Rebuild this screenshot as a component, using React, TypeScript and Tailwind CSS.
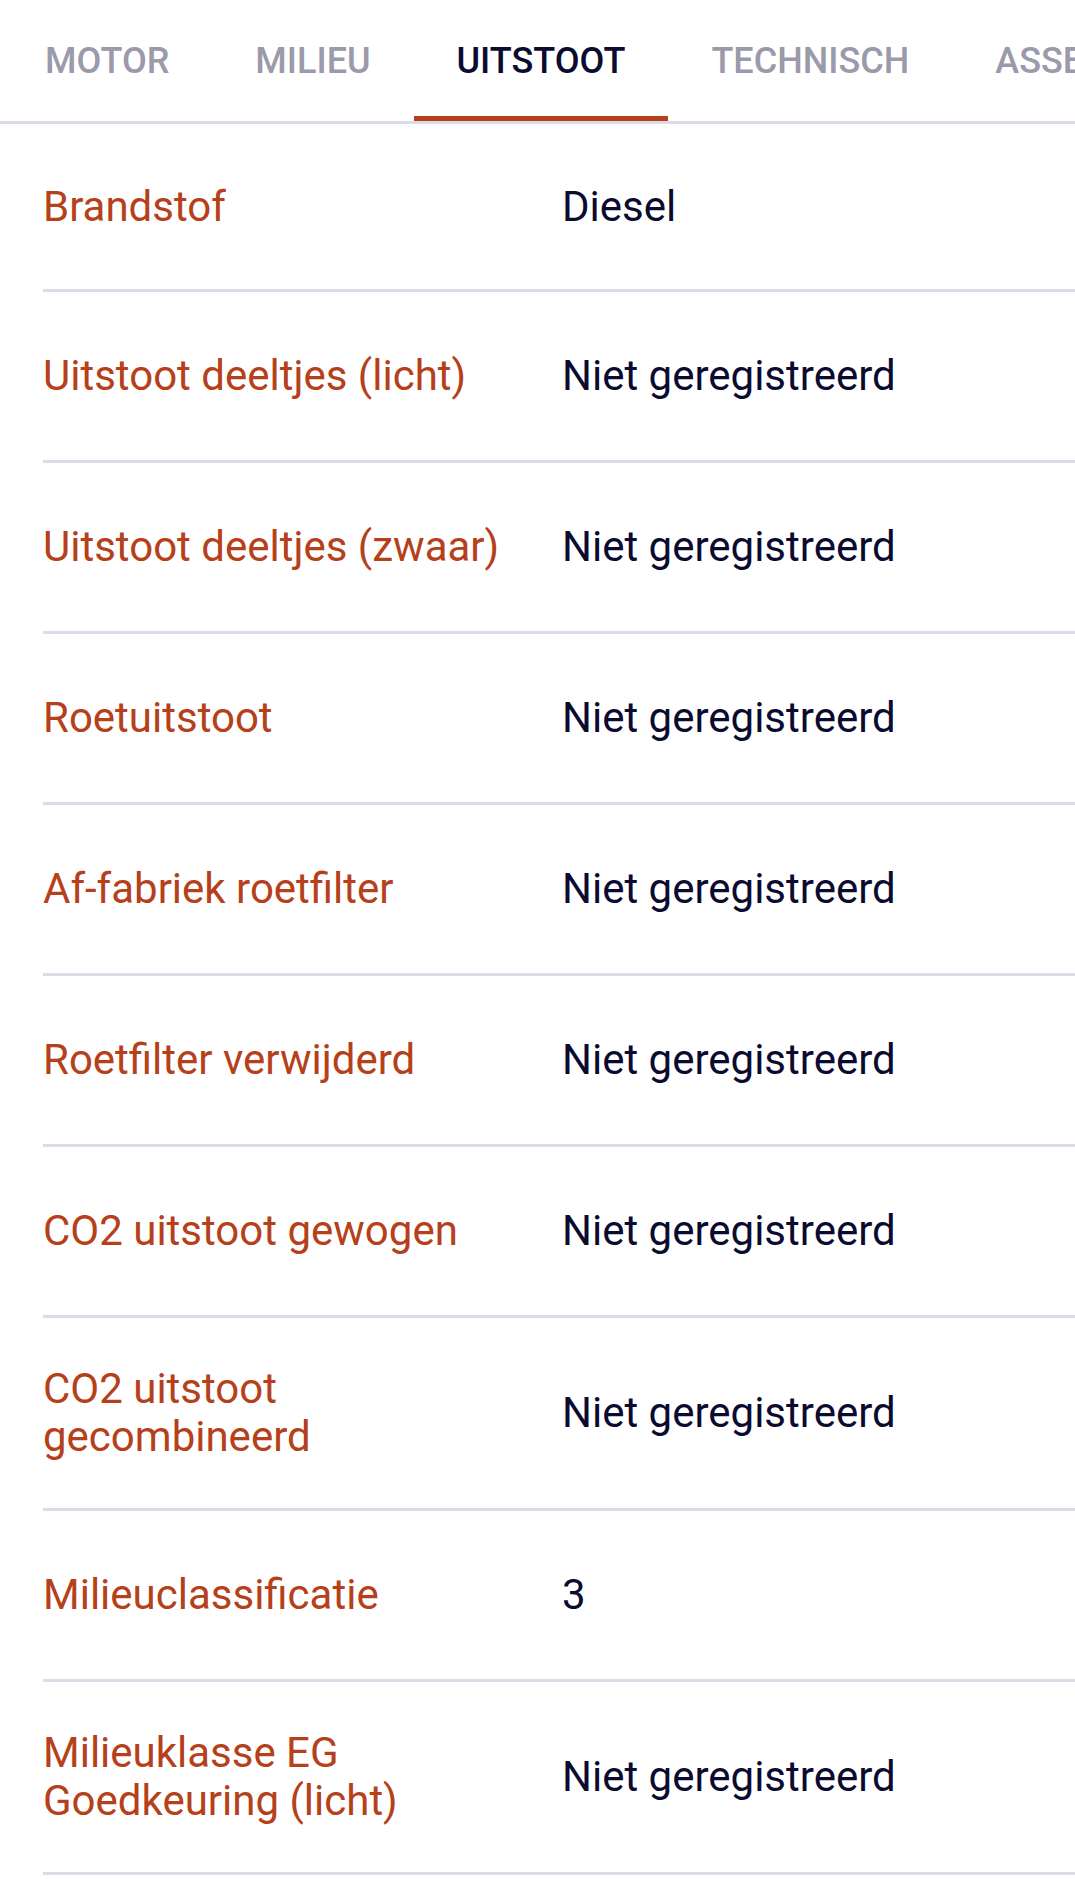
const tabs = ['Motor', 'Milieu', 'Uitstoot', 'Technisch', 'Assemblage'];

const rows: { label: string; value: string }[] = [
  { label: 'Brandstof', value: 'Diesel' },
  { label: 'Uitstoot deeltjes (licht)', value: 'Niet geregistreerd' },
  { label: 'Uitstoot deeltjes (zwaar)', value: 'Niet geregistreerd' },
  { label: 'Roetuitstoot', value: 'Niet geregistreerd' },
  { label: 'Af-fabriek roetfilter', value: 'Niet geregistreerd' },
  { label: 'Roetfilter verwijderd', value: 'Niet geregistreerd' },
  { label: 'CO2 uitstoot gewogen', value: 'Niet geregistreerd' },
  { label: 'CO2 uitstoot gecombineerd', value: 'Niet geregistreerd' },
  { label: 'Milieuclassificatie', value: '3' },
  { label: 'Milieuklasse EG Goedkeuring (licht)', value: 'Niet geregistreerd' },
];

export default function App() {
  const active = 'Uitstoot';

  return (
    <div className="w-[1075px] h-[1879px] overflow-hidden bg-white font-['Roboto',sans-serif]">
      {/* tab bar, scrolls off to the right */}
      <div className="flex whitespace-nowrap pl-[2px] border-b-[3px] border-[#dcdce8]">
        {tabs.map((tab) => (
          <div
            key={tab}
            className={
              tab === active
                ? 'relative flex h-[121px] shrink-0 items-center px-[43px] text-[36px] font-medium uppercase text-[#0b0b30]'
                : 'relative flex h-[121px] shrink-0 items-center px-[43px] text-[36px] font-medium uppercase text-[#9a9aaa]'
            }
          >
            {tab}
            {tab === active && (
              <span className="absolute bottom-0 left-0 right-0 h-[5px] bg-[#b5401a]" />
            )}
          </div>
        ))}
      </div>

      {/* emission details */}
      <div className="pl-[43px]">
        {rows.map((row, i) => (
          <div
            key={row.label}
            className={
              i === 0
                ? 'flex min-h-[168px] items-center border-b-[3px] border-[#dcdce8] py-[47px] text-[42px] leading-[48px]'
                : 'flex min-h-[171px] items-center border-b-[3px] border-[#dcdce8] py-[47px] text-[42px] leading-[48px]'
            }
          >
            <div className="w-[519px] shrink-0 pr-[40px] text-[#b5401a]">{row.label}</div>
            <div className="text-[#0b0b30]">{row.value}</div>
          </div>
        ))}
      </div>
    </div>
  );
}
